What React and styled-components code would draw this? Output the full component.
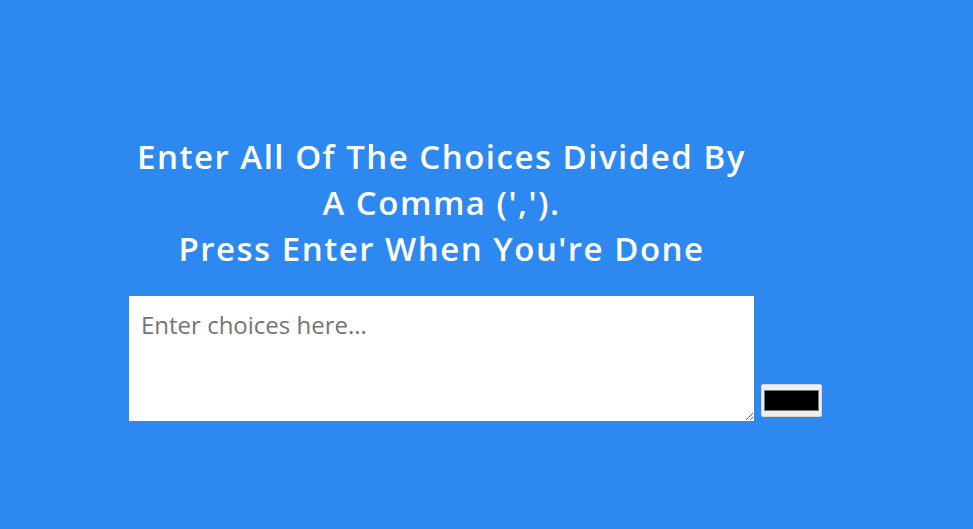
import React from "react";
import styled, { createGlobalStyle } from "styled-components";

const Global = createGlobalStyle`
  html, body {
    margin: 0;
    padding: 0;
    background: #2d89ef;
    height: 100%;
  }
  #root { min-height: 100%; }
`;

const Page = styled.main`
  min-height: 529px;
  background: #2d89ef;
  padding: 134px 0 0 129px;
  box-sizing: border-box;
  font-family: "Open Sans", "Noto Sans", sans-serif;
`;

const Column = styled.div`
  width: 625px;
  display: flex;
  flex-direction: column;
  gap: 24px;
`;

const Title = styled.h1`
  margin: 0;
  color: #ffffff;
  font-family: "Open Sans", "Noto Sans", sans-serif;
  font-weight: 600;
  font-size: 33px;
  letter-spacing: 1.5px;
  line-height: 46px;
  text-align: center;
  white-space: nowrap;
`;

const Row = styled.div`
  display: flex;
  align-items: flex-end;
  width: 700px;
`;

const Choices = styled.textarea`
  width: 625px;
  height: 125px;
  box-sizing: border-box;
  border: none;
  outline: none;
  padding: 13px 12px;
  margin: 0;
  font-family: "Open Sans", "Noto Sans", sans-serif;
  font-size: 24px;
  line-height: 31px;
  color: #222;
  background: #fff;
  caret-color: #000;
  &::placeholder { color: #757575; }
`;

const Swatch = styled.input`
  width: 61px;
  height: 33px;
  margin: 0 0 4px 7px;
  padding: 5px 2px;
  box-sizing: border-box;
  border: 1px solid #d6d6d6;
  border-radius: 2px;
  background: #efefef;
  cursor: pointer;
  &::-webkit-color-swatch-wrapper { padding: 0; }
  &::-webkit-color-swatch { border: 1px solid #777; border-radius: 0; }
`;

export default function App() {
  return (
    <>
      <Global />
      <Page>
        <Column>
          <Title>
            Enter All Of The Choices Divided By
            <br />A Comma (',').
            <br />Press Enter When You're Done
          </Title>
          <Row>
            <Choices placeholder="Enter choices here..." autoFocus />
            <Swatch type="color" defaultValue="#000000" />
          </Row>
        </Column>
      </Page>
    </>
  );
}
